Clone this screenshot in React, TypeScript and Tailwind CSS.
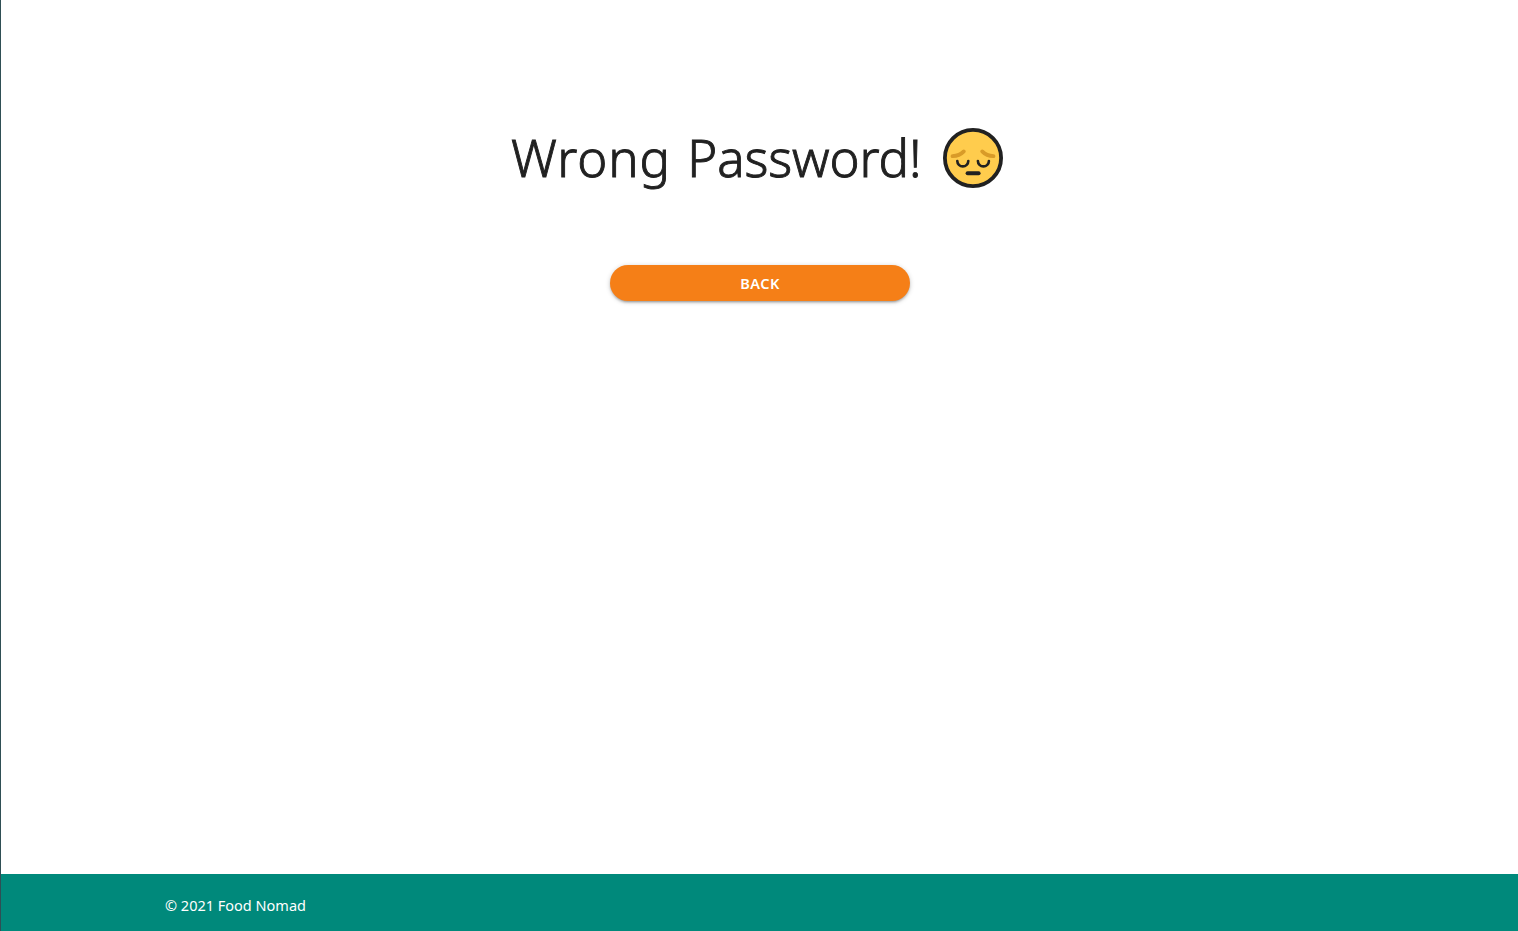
function PensiveFace() {
  return (
    <svg viewBox="0 0 60 60" className="block h-[60px] w-[60px] shrink-0" fill="none" strokeLinecap="round" aria-label="Pensive face">
      <circle cx="30" cy="30" r="28.1" fill="#ffcc4d" stroke="#212121" strokeWidth="3.8" />
      <g stroke="#d99b28" strokeWidth="3.8">
        <path d="M9.5 28.2 Q16.5 28 20.8 23.4" />
        <path d="M50.5 28.2 Q43.5 28 39.2 23.4" />
      </g>
      <g stroke="#212121" strokeWidth="2.6">
        <path d="M14.3 33 a5.5 5.4 0 0 0 11 0" />
        <path d="M34.9 33 a5.5 5.4 0 0 0 11 0" />
      </g>
      <path d="M24.6 45.2 H35.6" stroke="#212121" strokeWidth="4" />
    </svg>
  );
}

export default function App() {
  return (
    <div className="flex h-screen flex-col border-l border-[#2f4f55] bg-white font-['Noto_Sans','Open_Sans',sans-serif]">
      <main className="flex grow flex-col items-center">
        <div className="mr-[5px] mt-[128px] flex h-[60px] w-[492px] items-center justify-between">
          <h1 className="whitespace-nowrap pb-[2px] text-[51px] font-light leading-[58px] text-[#212121] [word-spacing:3px] [-webkit-text-stroke:0.9px_#212121]">
            <span className="tracking-[0.9px]">Wrong</span> <span className="tracking-[-0.1px]">Password!</span>
          </h1>
          <PensiveFace />
        </div>
        <button className="mt-[77px] h-9 w-[300px] rounded-full bg-[#f57f17] pl-px pt-px text-center text-[14.5px] font-semibold leading-[35px] tracking-[0.5px] text-white shadow-[0_2px_2px_0_rgba(0,0,0,0.14),0_3px_1px_-2px_rgba(0,0,0,0.12),0_1px_5px_0_rgba(0,0,0,0.2)]">
          BACK
        </button>
      </main>
      <footer className="flex h-[57px] shrink-0 items-center bg-[#00897b] pl-[164px] pt-[4px]">
        <p className="whitespace-nowrap text-[14.5px] leading-6 text-white">© 2021 Food Nomad</p>
      </footer>
    </div>
  );
}
